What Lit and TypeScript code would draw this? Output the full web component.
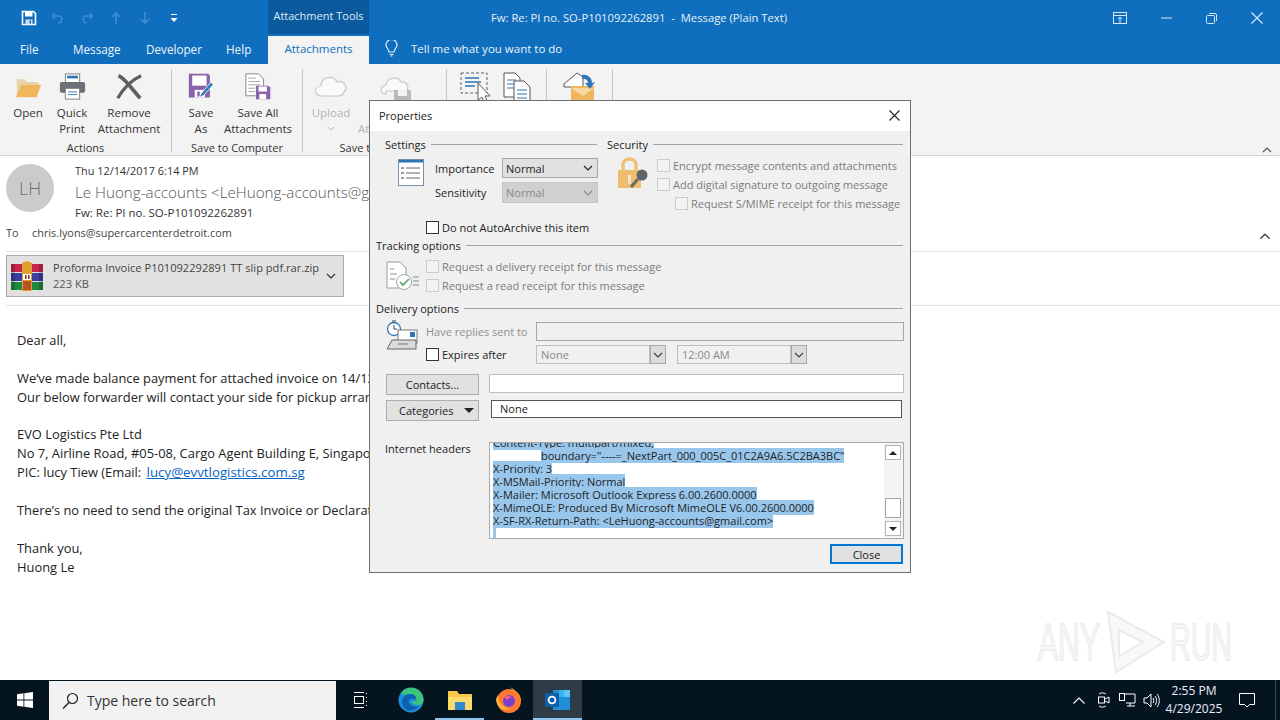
import { LitElement, html, css } from "lit";
import { customElement } from "lit/decorators.js";

const F = html`<svg width="30" height="30" viewBox="0 0 30 30"><path d="M2 7h9l2 3h13v3H8L2 26z" fill="#e9d3a8"/><path d="M7 13h22l-5 14H1z" fill="#efb65e"/></svg>`;
const PRINT = html`<svg width="30" height="30" viewBox="0 0 30 30"><rect x="7" y="1" width="16" height="10" fill="#fff" stroke="#777"/><rect x="9" y="3" width="12" height="3" fill="#2e75b6"/><rect x="1" y="10" width="28" height="12" rx="2" fill="#6b7178"/><rect x="7" y="17" width="16" height="12" fill="#fff" stroke="#777"/><path d="M10 21h10M10 24h10" stroke="#2e75b6"/></svg>`;
const REMOVE = html`<svg width="32" height="30" viewBox="0 0 32 30"><path d="M4 3c8 4 14 14 24 25" stroke="#605e5c" stroke-width="4" fill="none"/><path d="M29 3C20 7 10 16 3 28" stroke="#605e5c" stroke-width="3.500" fill="none"/></svg>`;
const SAVEAS = html`<svg width="32" height="32" viewBox="0 0 32 32"><path d="M1 1h23l2 2v26H1z" fill="#8a62ab"/><rect x="5" y="3" width="17" height="12" fill="#fff"/><rect x="8" y="20" width="12" height="9" fill="#fff"/><rect x="11" y="22" width="3" height="6" fill="#8a62ab"/><path d="M13 29l3-5L27 11l3 3L18 27z" fill="#2e75b6" stroke="#fff"/></svg>`;
const SAVEALL = html`<svg width="32" height="32" viewBox="0 0 32 32"><path d="M1 1h15l6 6v20H1z" fill="#fff" stroke="#777"/><path d="M4 6h9M4 10h14M4 14h14M4 18h8M4 22h8" stroke="#999"/><path d="M13 15h14l3 2v14H13z" fill="#8a62ab"/><rect x="16" y="16" width="10" height="6" fill="#fff"/><rect x="17" y="25" width="8" height="6" fill="#fff"/></svg>`;
const CLOUD = html`<svg width="34" height="24" viewBox="0 0 34 24"><path d="M8 22c-9 0-8-10-1-10 0-9 12-12 16-4 8-2 11 6 7 10-1 3-4 4-6 4z" fill="#fafafa" stroke="#c8c8c8" stroke-width="1.200"/></svg>`;
const CLOUD2 = html`<svg width="34" height="36" viewBox="0 0 34 36"><path d="M6 18c-7 0-6-8 0-9 1-8 12-9 15-3 6-1 9 6 5 9H6z" fill="#fafafa" stroke="#c8c8c8" stroke-width="1.200"/><rect x="14" y="14" width="17" height="20" fill="#b9b9b9"/><rect x="18" y="14" width="9" height="6" fill="#f3f3f3"/><rect x="18" y="26" width="9" height="8" fill="#f3f3f3"/></svg>`;
const ASSIGN = html`<svg width="32" height="34" viewBox="0 0 32 34"><rect x="1" y="1" width="26" height="20" fill="none" stroke="#50607a" stroke-dasharray="3 2"/><path d="M5 6h14M5 10h16M5 14h10" stroke="#2e75b6" stroke-width="1.300"/><path d="M18 11l12 13h-5l3 7-3 1-3-7-4 3z" fill="#fff" stroke="#605e5c"/></svg>`;
const COPY = html`<svg width="30" height="34" viewBox="0 0 30 34"><path d="M2 1h11l5 5v19H2z" fill="#fff" stroke="#555"/><path d="M5 8h9M5 12h9M5 16h9" stroke="#2e75b6"/><path d="M12 9h10l6 6v19H12z" fill="#fff" stroke="#555"/><path d="M15 18h10M15 22h10M15 26h10M15 30h10" stroke="#2e75b6"/></svg>`;
const MAILREPLY = html`<svg width="32" height="34" viewBox="0 0 32 34"><path d="M1 12L14 1l6 4v10H1z" fill="#fff" stroke="#555"/><path d="M8 14h23v20H8z" fill="#efb65e"/><path d="M8 16l12 8 11-8" fill="#f7d9a5"/><path d="M19 3c6-1 10 3 10 8l3-1-5 7-5-6 3 0c0-3-3-5-6-4z" fill="#2e75b6"/></svg>`;
const TOOLSAVE = html`<svg width="16" height="16" viewBox="0 0 16 16"><path d="M1.500 1.500h11l2 2v11h-13z" fill="none" stroke="#fff" stroke-width="1.600"/><rect x="4" y="2" width="7.500" height="4.500" fill="#fff"/><rect x="4.500" y="9.500" width="7" height="5" fill="#cfe3f5"/><rect x="8.500" y="10.500" width="1.500" height="3" fill="#106ebe"/></svg>`;
const LOCK = html`<svg width="32" height="32" viewBox="0 0 32 32"><path d="M6 14V8c0-8 13-8 13 0v6" fill="none" stroke="#f0c07a" stroke-width="3.500"/><rect x="1" y="13" width="23" height="18" fill="#f0bc70"/><rect x="11" y="18" width="3" height="9" fill="#fbe7c6"/><path d="M14 30l7-8" stroke="#6b6b6b" stroke-width="3"/><circle cx="25" cy="18" r="5.500" fill="#5f6468"/></svg>`;
const LISTICON = html`<svg width="27" height="28" viewBox="0 0 27 28"><rect x=".5" y=".5" width="25" height="26" fill="#fff" stroke="#7a90aa"/><rect x="1" y="1" width="24" height="2.500" fill="#2e75b6"/><path d="M8 9h14M8 14h14M8 19h14" stroke="#666"/><path d="M3 9h3M3 14h3M3 19h3" stroke="#999" stroke-width="2"/></svg>`;
const TRACK = html`<svg width="33" height="31" viewBox="0 0 33 31"><path d="M1 1h13l6 6v20H1z" fill="#fff" stroke="#999"/><path d="M4 8h4M4 13h7M4 18h5" stroke="#888"/><circle cx="18" cy="21" r="7.500" fill="#fff" stroke="#9aa"/><path d="M14 21l3 3 6-6" fill="none" stroke="#5aa469" stroke-width="1.700"/><path d="M27 16h6M27 20h6M27 24h6" stroke="#888"/></svg>`;
const DELIV = html`<svg width="33" height="31" viewBox="0 0 33 31"><circle cx="8" cy="9" r="6.500" fill="#fff" stroke="#2e75b6" stroke-width="1.300"/><path d="M8 5v4h3M6 1h4" stroke="#444" fill="none"/><rect x="12" y="10" width="19" height="13" fill="#fff" stroke="#777"/><rect x="24" y="12" width="5" height="5" fill="#2e75b6"/><path d="M1 29l5-9h24v9z" fill="#dadada" stroke="#666"/><path d="M12 24h10" stroke="#777"/></svg>`;
const CHEV = html`<svg width="10" height="6" viewBox="0 0 10 6"><path d="M1 1l4 4 4-4" fill="none" stroke="currentColor" stroke-width="1.200"/></svg>`;
const WINRAR = html`<svg width="32" height="30" viewBox="0 0 32 30"><rect x="0" y="3" width="32" height="8" fill="#c8254a"/><rect x="0" y="12" width="32" height="8" fill="#3b3f9e"/><rect x="0" y="21" width="32" height="8" fill="#1f8a3d"/><path d="M0 3h4v26H0zM28 3h4v26h-4z" fill="#00000033"/><path d="M11 2l5-2 5 2v28H11z" fill="#e0a030"/><rect x="12" y="13" width="8" height="6" fill="#fff"/><rect x="14" y="14" width="1.500" height="4" fill="#6b3b1a"/><rect x="17" y="14" width="1.500" height="4" fill="#6b3b1a"/><rect x="12" y="20" width="8" height="9" fill="#b5542a"/></svg>`;

@customElement("app-root")
class AppRoot extends LitElement {
  static styles = css`
    :host { display:block; width:1280px; height:720px; overflow:hidden; font-family:"Open Sans","Noto Sans",sans-serif; font-size:11.5px; color:#333; position:relative; background:#fff; }
    * { box-sizing:border-box; }
    svg { display:block; flex:none; }
    .app { display:flex; flex-direction:column; height:720px; }
    .title { height:36px; background:#106ebe; display:flex; flex:none; color:#e8f1fa; }
    .tools { display:flex; align-items:center; width:268px; flex:none; }
    .qa { width:29px; display:flex; justify-content:center; flex:none; font-size:13px; line-height:16px; }
    .qa.save { margin-left:14px; }
    .attool { width:101px; height:34px; background:#0c5a9e; display:flex; align-items:center; justify-content:center; font-size:11px; color:#dcebf8; flex:none; padding-bottom:3px; }
    .caption { width:367px; padding-left:122px; line-height:36px; white-space:pre; font-size:11.25px; flex:none; color:#e6eff8; }
    .winbtns { margin-left:auto; display:flex; align-items:center; padding-right:17px; gap:34px; }
    .winbtns svg { stroke:#d6e8f8; fill:none; }
    .tabs { height:28px; background:#106ebe; display:flex; align-items:center; color:#edf4fb; font-size:11.7px; flex:none; }
    .tab { flex:none; white-space:nowrap; margin-bottom:3px; }
    .t1 { margin-left:20px; width:53px; }
    .t2 { width:73px; }
    .t3 { width:80px; }
    .t4 { width:42px; }
    .active { width:101px; height:28px; margin-bottom:0; padding-bottom:3px; background:#f3f3f3; color:#106ebe; font-size:11.5px; display:flex; align-items:center; justify-content:center; }
    .bulb { margin-left:16px; margin-right:13px; margin-bottom:3px; }
    .tell { font-size:11.5px; }
    .ribbon { height:92px; background:#f3f3f3; border-bottom:1px solid #d4d4d4; display:flex; flex:none; padding-top:5px; }
    .grp { flex:none; position:relative; display:flex; flex-direction:column; height:83px; border-right:1px solid #c6c6c6; white-space:nowrap; }
    .g1 { width:172px; padding-left:6px; }
    .g2 { width:131px; padding-left:4px; }
    .g3 { width:144px; padding-left:3px; }
    .g4 { width:100px; padding-left:8px; }
    .g5 { width:66px; padding-left:10px; }
    .btns { display:flex; height:71px; flex:none; }
    .rb { flex:none; display:flex; flex-direction:column; align-items:center; text-align:center; line-height:16px; font-size:11.5px; }
    .rb .ic { height:34px; margin-bottom:2px; display:flex; align-items:center; justify-content:center; }
    .g1 .ic svg, .g2 .ic svg { height:27px; width:auto; }
    .w40 { width:40px; } .w42 { width:42px; } .w44 { width:44px; } .w70 { width:70px; } .w50 { width:50px; } .w64 { width:64px; } .w72 { width:72px; }
    .gl { text-align:center; font-size:11px; line-height:16px; }
    .g1 .gl { margin-left:-6px; }
    .g2 .gl { margin-left:-4px; }
    .g3 .gl { margin-left:-3px; }
    .off { color:#b4b4b4; }
    .rb .ic.shift { margin-left:10px; align-items:flex-start; padding-top:7px; }
    .rb .ic.low { align-items:flex-start; padding-top:3px; }
    .mini svg { width:8px; height:5px; margin-top:5px; }
    .collapse { margin-left:auto; align-self:flex-end; margin-right:8px; margin-bottom:2px; color:#555; }
    .up { transform:rotate(180deg); }
    .main { flex:1; min-height:0; overflow:hidden; background:#fff; position:relative; }
    .hd { display:flex; height:66px; padding:8px 0 0 6px; }
    .avatar { width:48px; height:48px; border-radius:50%; background:#cbcbcb; color:#6e6e6e; font-size:18px; display:flex; align-items:center; justify-content:center; flex:none; font-weight:300; }
    .info { margin-left:21px; margin-top:-3px; white-space:nowrap; }
    .date { line-height:20px; font-size:10.9px; }
    .name { line-height:22px; font-size:15.2px; color:#555; font-weight:300; }
    .subj { line-height:20px; font-size:11.5px; }
    .to { display:flex; height:20px; align-items:center; padding-left:6px; font-size:10.9px; color:#444; }
    .to span:first-child { width:26px; }
    .rule { height:1px; background:#e1e1e1; margin-left:6px; }
    .r1 { margin-top:9px; }
    .chev-to { margin-left:auto; margin-right:9px; margin-top:9px; color:#444; }
    .chev-to svg { width:12px; height:7px; }
    .att { margin:3px 0 0 6px; width:338px; height:42px; background:#e1e1e1; border:1px solid #ababab; display:flex; align-items:center; padding-left:4px; }
    .att .txt { margin-left:10px; line-height:16px; font-size:11.1px; white-space:nowrap; width:273px; color:#444; }
    .att .sz { color:#555; }
    .r2 { margin-top:8px; }
    .body { padding:25px 0 0 17px; font-size:12.9px; line-height:18.9px; color:#222; white-space:nowrap; }
    .body div { height:18.9px; }
    a { color:#0563c1; text-decoration:underline; margin-left:2px; font-size:13.3px; }
    .wm { position:absolute; left:1030px; top:450px; }
    .wm text { font-family:"Liberation Sans",sans-serif; font-size:52px; fill:#f8f8f8; stroke:#ebebeb; stroke-width:1.400; }
    .bar { height:40px; background:#04151f; display:flex; align-items:center; color:#fff; flex:none; }
    .start { width:49px; display:flex; justify-content:center; flex:none; }
    .search { width:287px; height:39px; margin-top:1px; background:#f2f2f2; color:#333; display:flex; align-items:center; padding-left:13px; font-size:14px; flex:none; }
    .search span { margin-left:8px; }
    .tb { width:49px; height:40px; display:flex; align-items:center; justify-content:center; flex:none; position:relative; }
    .tb.first { width:50px; }
    .tb.run { box-shadow:inset 0 -2px 0 #8fc4ee; }
    .tb.cur { background:#2d3c46; box-shadow:inset 0 -2px 0 #8fc4ee; }
    .tray { margin-left:auto; display:flex; align-items:center; }
    .ti { width:24px; display:flex; justify-content:center; }
    .clock { width:62px; text-align:center; line-height:18px; font-size:12px; color:#eef; white-space:nowrap; }
    .note { width:50px; display:flex; justify-content:center; padding-right:6px; }
    .endline { width:1px; height:40px; background:#3c4a54; margin-right:4px; }

    .dlg { position:absolute; left:369px; top:100px; width:542px; height:473px; background:#f0f0f0; border:1px solid #6e6e6e; z-index:2; }
    .dt { height:30px; background:#fff; display:flex; align-items:center; justify-content:space-between; padding:0 10px 2px 9px; font-size:11px; color:#222; }
    .db { padding:0 7px 0 6px; font-size:11px; color:#222; white-space:nowrap; }
    .hdr { display:flex; align-items:center; gap:5px; height:14px; }
    .hdr::after { content:""; flex:1; height:1px; background:#a3a3a3; }
    .top { display:grid; grid-template-columns:212px 296px; column-gap:10px; margin-left:9px; padding-top:7px; height:108px; margin-top:-1px; }
    .srow { display:flex; margin-top:6px; }
    .sicon { margin:2px 10px 0 13px; }
    .sform { display:grid; grid-template-columns:67px 96px; row-gap:4px; grid-template-rows:20px 21px; align-items:center; margin-top:1px; }
    .sel { display:flex; align-items:center; justify-content:space-between; height:100%; padding:0 4px 0 3px; background:#e1e1e1; border:1px solid #a6a6a6; color:#222; }
    .sel.dis { background:#d0d0d0; border-color:#c4c4c4; color:#8a8a8a; }
    .cb { width:13px; height:13px; flex:none; background:#fff; border:1px solid #333; }
    .cb.dis { background:#f3f3f3; border-color:#cbcbcb; }
    .ck { display:flex; align-items:center; gap:3px; height:19px; }
    .ck.dis { color:#7c7c7c; }
    .auto { margin:15px 0 0 41px; }
    .lockc { margin:0 8px 0 10px; }
    .indent { margin-left:18px; }
    .checks { margin-top:-1px; }
    .sec { height:63px; }
    .srow2 { display:flex; padding-left:10px; margin-top:5px; }
    .sic { width:40px; flex:none; }
    .srow2 .sic { margin-top:4px; }
    .drow { display:flex; padding-left:10px; margin-top:5px; }
    .dright { width:478px; margin-right:-1px; }
    .line1 { display:flex; align-items:center; height:19px; margin-top:2px; }
    .lab { width:110px; flex:none; }
    .lab.dis { color:#8f8f8f; }
    .inp { flex:1; height:19px; background:#fff; border:1px solid #bdbdbd; }
    .inp.dis { background:#f0f0f0; border-color:#a8a8a8; }
    .line2 { display:flex; height:19px; margin-top:4px; align-items:center; }
    .combo { display:flex; width:130px; height:19px; margin-right:11px; }
    .combo .v { width:114px; border:1px solid #bdbdbd; padding-left:4px; color:#8a8a8a; line-height:17px; background:#f0f0f0; }
    .combo .b { width:16px; background:#dcdcdc; border:1px solid #a8a8a8; display:flex; align-items:center; justify-content:center; color:#444; }
    .crow { display:flex; padding-left:10px; margin-top:10px; align-items:flex-start; margin-right:-1px; }
    .btn { width:93px; height:21px; background:#e1e1e1; border:1px solid #adadad; display:flex; align-items:center; justify-content:center; flex:none; color:#222; }
    .crow .inp { margin-left:10px; }
    .r5 { margin-top:5px; margin-right:1px; }
    .r5 .none { margin:0 0 0 12px; flex:1; height:18px; background:#fff; border:1px solid #555; padding-left:8px; line-height:16px; }
    .cat { justify-content:space-between; padding:0 4px 0 12px; }
    .tri { width:0; height:0; border-left:5px solid transparent; border-right:5px solid transparent; border-top:5px solid #222; }
    .u { text-decoration:underline; }
    .irow { display:flex; margin-top:21px; margin-right:-1px; }
    .ilab { width:113px; padding:0 0 0 9px; flex:none; line-height:14px; }
    .box { flex:1; height:97px; background:#fff; border:1px solid #a9a9a9; display:flex; overflow:hidden; }
    .ht { flex:1; min-width:0; overflow:hidden; padding-left:3px; font-size:11px; line-height:13px; color:#1e1e1e; }
    .ht div { height:13px; }
    .ht div.clip { margin-top:-7px; }
    .ht span { background:#99c7ec; }
    .ht .ind { padding-left:48px; }
    .scroll { width:19px; flex:none; padding:2px 2px 2px 1px; background:#f4f4f4; display:flex; flex-direction:column; justify-content:space-between; }
    .sb { width:16px; height:15px; background:#fff; border:1px solid #b5b5b5; display:flex; align-items:center; justify-content:center; }
    .sthumb { height:20px; width:16px; background:#fff; border:1px solid #a5a5a5; margin-top:auto; margin-bottom:3px; }
    .tu { width:0; height:0; border-left:4px solid transparent; border-right:4px solid transparent; border-bottom:4px solid #222; }
    .td { width:0; height:0; border-left:4px solid transparent; border-right:4px solid transparent; border-top:4px solid #222; }
    .closerow { display:flex; justify-content:flex-end; margin-top:5px; }
    .close { width:73px; height:20px; background:#e1e1e1; border:2px solid #0078d7; display:flex; align-items:center; justify-content:center; }
  `;

  render() {
    return html`<div class="app">
      <div class="title">
        <div class="tools">
          <div class="qa save">${TOOLSAVE}</div>
          <div class="qa"><svg width="14" height="14" viewBox="0 0 14 14"><path d="M4 2L1.500 5 4 8M2 5h6c4 0 4 7-1 7" fill="none" stroke="#3f8ed4" stroke-width="1.500"/></svg></div>
          <div class="qa"><svg width="14" height="14" viewBox="0 0 14 14"><path d="M10 2l2.500 3L10 8M12 5H6c-4 0-4 7 1 7" fill="none" stroke="#3f8ed4" stroke-width="1.500"/></svg></div>
          <div class="qa"><svg width="12" height="14" viewBox="0 0 12 14"><path d="M6 13V2M2 6l4-4 4 4" fill="none" stroke="#3f8ed4" stroke-width="1.600"/></svg></div>
          <div class="qa"><svg width="12" height="14" viewBox="0 0 12 14"><path d="M6 1v11M2 8l4 4 4-4" fill="none" stroke="#3f8ed4" stroke-width="1.600"/></svg></div>
          <div class="qa"><svg width="8" height="10" viewBox="0 0 8 10"><path d="M1 1.500h6" stroke="#fff"/><path d="M.5 5h7L4 9z" fill="#fff"/></svg></div>
        </div>
        <div class="attool">Attachment Tools</div>
        <div class="caption">Fw: Re: PI no. SO-P101092262891  -  Message (Plain Text)</div>
        <div class="winbtns">
          <svg width="14" height="12" viewBox="0 0 14 12"><rect x=".5" y=".5" width="13" height="11"/><path d="M.5 3.500h13M7 11V5M5 7l2-2 2 2"/></svg>
          <svg width="11" height="2" viewBox="0 0 11 2"><path d="M0 1h11"/></svg>
          <svg width="11" height="11" viewBox="0 0 11 11"><rect x=".5" y="2.500" width="8" height="8" rx="1"/><path d="M3 .5h6a1.500 1.500 0 011.500 1.500v6"/></svg>
          <svg width="12" height="12" viewBox="0 0 12 12"><path d="M.5.5l11 11M11.500.5l-11 11" stroke-width="1.200"/></svg>
        </div>
      </div>
      <div class="tabs">
        <div class="tab t1">File</div><div class="tab t2">Message</div><div class="tab t3">Developer</div><div class="tab t4">Help</div>
        <div class="tab active">Attachments</div>
        <svg class="bulb" width="13" height="17" viewBox="0 0 13 17"><path d="M4 12c0-3-3-4-3-7a5.500 5.500 0 0111 0c0 3-3 4-3 7z" fill="none" stroke="#e8f1fa" stroke-width="1.200"/><path d="M4.500 14.500h4M5.500 16h2" stroke="#e8f1fa"/></svg>
        <div class="tab tell">Tell me what you want to do</div>
      </div>
      <div class="ribbon">
        <div class="grp g1"><div class="btns">
          <div class="rb w44"><div class="ic">${F}</div>Open</div>
          <div class="rb w44"><div class="ic">${PRINT}</div>Quick<br>Print</div>
          <div class="rb w70"><div class="ic">${REMOVE}</div>Remove<br>Attachment</div>
        </div><div class="gl">Actions</div></div>
        <div class="grp g2"><div class="btns">
          <div class="rb w50"><div class="ic">${SAVEAS}</div>Save<br>As</div>
          <div class="rb w64"><div class="ic">${SAVEALL}</div>Save All<br>Attachments</div>
        </div><div class="gl">Save to Computer</div></div>
        <div class="grp g3"><div class="btns">
          <div class="rb w50 off"><div class="ic">${CLOUD}</div>Upload<div class="mini">${CHEV}</div></div>
          <div class="rb w72 off"><div class="ic shift">${CLOUD2}</div>Save<br>Attachments</div>
        </div><div class="gl">Save to Cloud</div></div>
        <div class="grp g4"><div class="btns">
          <div class="rb w42"><div class="ic low">${ASSIGN}</div></div>
          <div class="rb w40"><div class="ic low">${COPY}</div></div>
        </div></div>
        <div class="grp g5"><div class="btns"><div class="rb w44"><div class="ic low">${MAILREPLY}</div></div></div></div>
        <div class="collapse"><div class="up">${CHEV}</div></div>
      </div>
      <div class="main">
        <div class="hd">
          <div class="avatar">LH</div>
          <div class="info">
            <div class="date">Thu 12/14/2017 6:14 PM</div>
            <div class="name">Le Huong-accounts &lt;LeHuong-accounts@gmail.com&gt;</div>
            <div class="subj">Fw: Re: PI no. SO-P101092262891</div>
          </div>
        </div>
        <div class="to"><span>To</span><span>chris.lyons@supercarcenterdetroit.com</span><div class="chev-to up">${CHEV}</div></div>
        <div class="rule r1"></div>
        <div class="att">${WINRAR}<div class="txt">Proforma Invoice P101092292891 TT slip pdf.rar.zip<br><span class="sz">223 KB</span></div>${CHEV}</div>
        <div class="rule r2"></div>
        <div class="body">
          <div>Dear all,</div><div></div>
          <div>We’ve made balance payment for attached invoice on 14/12/2017.</div>
          <div>Our below forwarder will contact your side for pickup arrangement.</div><div></div>
          <div>EVO Logistics Pte Ltd</div>
          <div>No 7, Airline Road, #05-08, Cargo Agent Building E, Singapore 819834</div>
          <div>PIC: lucy Tiew (Email: <a>lucy@evvtlogistics.com.sg</a></div><div></div>
          <div>There’s no need to send the original Tax Invoice or Declaration.</div><div></div>
          <div>Thank you,</div><div>Huong Le</div>
        </div>
        <svg class="wm" width="240" height="80" viewBox="0 0 240 80"><text x="8" y="54" textLength="62" lengthAdjust="spacingAndGlyphs">ANY</text><text x="140" y="54" textLength="62" lengthAdjust="spacingAndGlyphs">RUN</text><path d="M78 6l56 30-48 30zM89 24v26l24-14z" fill="#f8f8f8" stroke="#ebebeb" stroke-width="2"/></svg>
      </div>
      <div class="bar">
        <div class="start"><svg width="16" height="16" viewBox="0 0 16 16"><path d="M0 2.200l6.500-.9v6.300H0zM7.300 1.200L16 0v7.600H7.300zM0 8.400h6.500v6.300L0 13.800zM7.300 8.400H16V16l-8.700-1.200z" fill="#fff"/></svg></div>
        <div class="search"><svg width="17" height="17" viewBox="0 0 17 17"><circle cx="10.500" cy="6.500" r="5" fill="none" stroke="#222" stroke-width="1.200"/><path d="M7 10.500L1 16.500" stroke="#222" stroke-width="1.400"/></svg><span>Type here to search</span></div>
        <div class="tb first"><svg width="18" height="16" viewBox="0 0 18 16"><path d="M2 .5h10M2 15.500h10M14.500 1v1M14.500 5v1M14.500 9v1M14.500 13v1" stroke="#fff"/><rect x="2.500" y="4.500" width="9" height="7" fill="none" stroke="#fff"/></svg></div>
        <div class="tb"><svg width="26" height="26" viewBox="0 0 26 26"><circle cx="13" cy="13" r="12.500" fill="#1a8fdc"/><path d="M3 6C6 1 13-.5 19 2c5 2.500 7 8 6.500 12-.5 3-3.500 4.500-7 4-3-.5-5-2-5-4h5c0-4-3-7-7-7-4 0-7 2-8.500-1z" fill="#3cc47c"/><path d="M4 15c0-5 4-8 9-8 3 0 5 2 5.500 5H13c-3 0-3 4 0 6 2 1.500 5 2 8 1-3 4-8 5.500-12 4-3-2-5-5-5-8z" fill="#0f5fb0"/></svg></div>
        <div class="tb run"><svg width="24" height="20" viewBox="0 0 24 20"><path d="M0 1h9l2 3h13v16H0z" fill="#f5c84c"/><rect x="0" y="7" width="24" height="13" fill="#fbd96b"/><rect x="7" y="12" width="10" height="8" fill="#2e8bd0"/></svg></div>
        <div class="tb"><svg width="26" height="26" viewBox="0 0 26 26"><circle cx="13" cy="14" r="12" fill="#ff7a2f"/><path d="M14 0c5 3 11 8 11 14-1-5-3-8-7-10z" fill="#ffc83d"/><circle cx="13" cy="14" r="6" fill="#7b3fd0"/><path d="M8 10c3-2 6-1 8 1-2 0-4 0-5 2z" fill="#ff5b7f"/><path d="M2 8c0 7 5 13 13 14-7 3-15-2-15-10z" fill="#ffb23d"/></svg></div>
        <div class="tb cur"><svg width="26" height="24" viewBox="0 0 26 24"><rect x="8" y="2" width="17" height="20" fill="#1f8fd8"/><rect x="14" y="2" width="6" height="7" fill="#36b2ee"/><rect x="19" y="2" width="6" height="7" fill="#5cc7f3"/><rect x="0" y="5" width="14" height="14" fill="#0f5fa8"/><circle cx="7" cy="12" r="3.400" fill="none" stroke="#fff" stroke-width="1.800"/></svg></div>
        <div class="tray">
          <div class="ti"><svg width="12" height="7" viewBox="0 0 12 7"><path d="M.5 6.500L6 1l5.500 5.500" fill="none" stroke="#fff" stroke-width="1.100"/></svg></div>
          <div class="ti"><svg width="13" height="16" viewBox="0 0 13 16"><rect x="1.500" y="5" width="6" height="6" fill="none" stroke="#fff"/><path d="M8 7l4-2v6l-4-2M2 2c2-1.500 5-1.500 7 0M2 14c2 1.500 5 1.500 7 0" fill="none" stroke="#fff"/></svg></div>
          <div class="ti"><svg width="17" height="15" viewBox="0 0 17 15"><path d="M5 1h11v9H7M8 13h8M11 10v3" fill="none" stroke="#fff"/><rect x=".5" y=".5" width="5" height="7" fill="none" stroke="#fff"/></svg></div>
          <div class="ti"><svg width="17" height="15" viewBox="0 0 17 15"><path d="M1 5h3l4-4v13l-4-4H1z M10 5c1 1 1 4 0 5M12 3c2 2 2 7 0 9M14 1c3 3 3 10 0 13" fill="none" stroke="#fff"/></svg></div>
          <div class="clock">2:55 PM<br>4/29/2025</div>
          <div class="note"><svg width="16" height="15" viewBox="0 0 16 15"><path d="M.5.500h15v11h-5L8 14l-2.500-2.500h-5z" fill="none" stroke="#fff"/></svg></div>
          <div class="endline"></div>
        </div>
      </div>
    </div>
    <div class="dlg">
      <div class="dt"><span>Properties</span><svg width="11" height="11" viewBox="0 0 11 11"><path d="M.5.500l10 10M10.500.500l-10 10" stroke="#222" fill="none" stroke-width="1.100"/></svg></div>
      <div class="db">
        <div class="top">
          <div>
            <div class="hdr">Settings</div>
            <div class="srow"><div class="sicon">${LISTICON}</div>
              <div class="sform"><span>Importance</span><div class="sel">Normal${CHEV}</div><span>Sensitivity</span><div class="sel dis">Normal${CHEV}</div></div>
            </div>
            <div class="ck auto"><div class="cb"></div>Do not AutoArchive this item</div>
          </div>
          <div>
            <div class="hdr">Security</div>
            <div class="srow"><div class="lockc">${LOCK}</div>
              <div class="checks">
                <div class="ck dis"><div class="cb dis"></div>Encrypt message contents and attachments</div>
                <div class="ck dis"><div class="cb dis"></div>Add digital signature to outgoing message</div>
                <div class="ck dis indent"><div class="cb dis"></div>Request S/MIME receipt for this message</div>
              </div>
            </div>
          </div>
        </div>
        <div class="sec">
          <div class="hdr">Tracking options</div>
          <div class="srow2"><div class="sic">${TRACK}</div><div>
            <div class="ck dis"><div class="cb dis"></div>Request a delivery receipt for this message</div>
            <div class="ck dis"><div class="cb dis"></div>Request a read receipt for this message</div>
          </div></div>
        </div>
        <div class="hdr">Delivery options</div>
        <div class="drow"><div class="sic">${DELIV}</div><div class="dright">
          <div class="line1"><span class="lab dis">Have replies sent to</span><div class="inp dis"></div></div>
          <div class="line2"><div class="ck lab"><div class="cb"></div>Expires after</div>
            <div class="combo"><div class="v">None</div><div class="b">${CHEV}</div></div>
            <div class="combo"><div class="v">12:00 AM</div><div class="b">${CHEV}</div></div>
          </div>
        </div></div>
        <div class="crow"><div class="btn">Contacts...</div><div class="inp"></div></div>
        <div class="crow r5"><div class="btn cat"><span>Cate<span class="u">g</span>ories</span><div class="tri"></div></div><div class="none">None</div></div>
        <div class="irow"><div class="ilab">Internet headers</div>
          <div class="box">
            <div class="ht">
              <div class="clip"><span>Content-Type: multipart/mixed;</span></div>
              <div class="ind"><span>boundary="----=_NextPart_000_005C_01C2A9A6.5C2BA3BC"</span></div>
              <div><span>X-Priority: 3</span></div>
              <div><span>X-MSMail-Priority: Normal</span></div>
              <div><span>X-Mailer: Microsoft Outlook Express 6.00.2600.0000</span></div>
              <div><span>X-MimeOLE: Produced By Microsoft MimeOLE V6.00.2600.0000</span></div>
              <div><span>X-SF-RX-Return-Path: &lt;LeHuong-accounts@gmail.com&gt;</span></div>
              <div><span>&nbsp;</span></div>
            </div>
            <div class="scroll"><div class="sb"><div class="tu"></div></div><div class="sthumb"></div><div class="sb"><div class="td"></div></div></div>
          </div>
        </div>
        <div class="closerow"><div class="close">Close</div></div>
      </div>
    </div>`;
  }
}
